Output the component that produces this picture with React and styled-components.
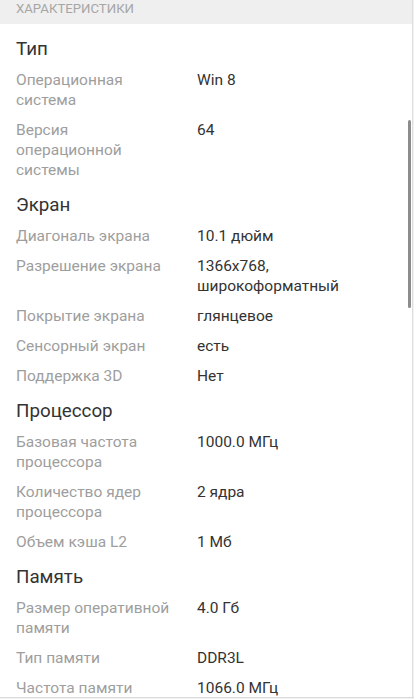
import React from 'react'
import styled, { createGlobalStyle } from 'styled-components'

const GlobalStyle = createGlobalStyle`
  html, body {
    margin: 0;
    padding: 0;
    background: #f2f2f2;
  }
  body {
    font-family: Roboto, "Noto Sans", "Liberation Sans", sans-serif;
    -webkit-font-smoothing: antialiased;
  }
`

const Screen = styled.div`
  position: relative;
  width: 414px;
  height: 699px;
  overflow: hidden;
  background: #f2f2f2;
`

const Panel = styled.div`
  width: 412px;
  min-height: 100%;
  background: #fff;
  border-right: 1px solid #dedede;
`

const Header = styled.div`
  height: 24px;
  padding-left: 16px;
  background: #efefef;
  color: #a6a6a6;
  font-size: 13.2px;
  line-height: 18px;
  text-transform: uppercase;
`

const List = styled.div`
  padding: 5px 16px 0;
`

const SectionTitle = styled.h2`
  margin: 0;
  padding: 8px 0 4px;
  font-size: 18.8px;
  line-height: 24px;
  font-weight: 400;
  color: #333;
`

const Row = styled.div`
  display: grid;
  grid-template-columns: 156px 1fr;
  column-gap: 25px;
  padding: 5px 0;
  font-size: 15.5px;
  line-height: 20px;
`

const Label = styled.span`
  color: #9e9e9e;
`

const Value = styled.span`
  color: #333;
`

const Scrollbar = styled.div`
  position: absolute;
  left: 408px;
  top: 120px;
  width: 3px;
  height: 188px;
  border-radius: 2px;
  background: #8c8c8c;
`

const BottomEdge = styled.div`
  position: absolute;
  left: 0;
  right: 0;
  bottom: 0;
  height: 1px;
  border-top: 1px solid #dadada;
  background: #f2f2f2;
`

const specs = [
  {
    title: 'Тип',
    items: [
      ['Операционная система', 'Win 8'],
      ['Версия операционной системы', '64'],
    ],
  },
  {
    title: 'Экран',
    items: [
      ['Диагональ экрана', '10.1 дюйм'],
      ['Разрешение экрана', '1366x768, широкоформатный'],
      ['Покрытие экрана', 'глянцевое'],
      ['Сенсорный экран', 'есть'],
      ['Поддержка 3D', 'Нет'],
    ],
  },
  {
    title: 'Процессор',
    items: [
      ['Базовая частота процессора', '1000.0 МГц'],
      ['Количество ядер процессора', '2 ядра'],
      ['Объем кэша L2', '1 Мб'],
    ],
  },
  {
    title: 'Память',
    items: [
      ['Размер оперативной памяти', '4.0 Гб'],
      ['Тип памяти', 'DDR3L'],
      ['Частота памяти', '1066.0 МГц'],
    ],
  },
]

export default function App() {
  return (
    <Screen>
      <GlobalStyle />
      <Panel>
        <Header>Характеристики</Header>
        <List>
          {specs.map((section) => (
            <section key={section.title}>
              <SectionTitle>{section.title}</SectionTitle>
              {section.items.map(([label, value]) => (
                <Row key={label}>
                  <Label>{label}</Label>
                  <Value>{value}</Value>
                </Row>
              ))}
            </section>
          ))}
        </List>
      </Panel>
      <Scrollbar />
      <BottomEdge />
    </Screen>
  )
}
